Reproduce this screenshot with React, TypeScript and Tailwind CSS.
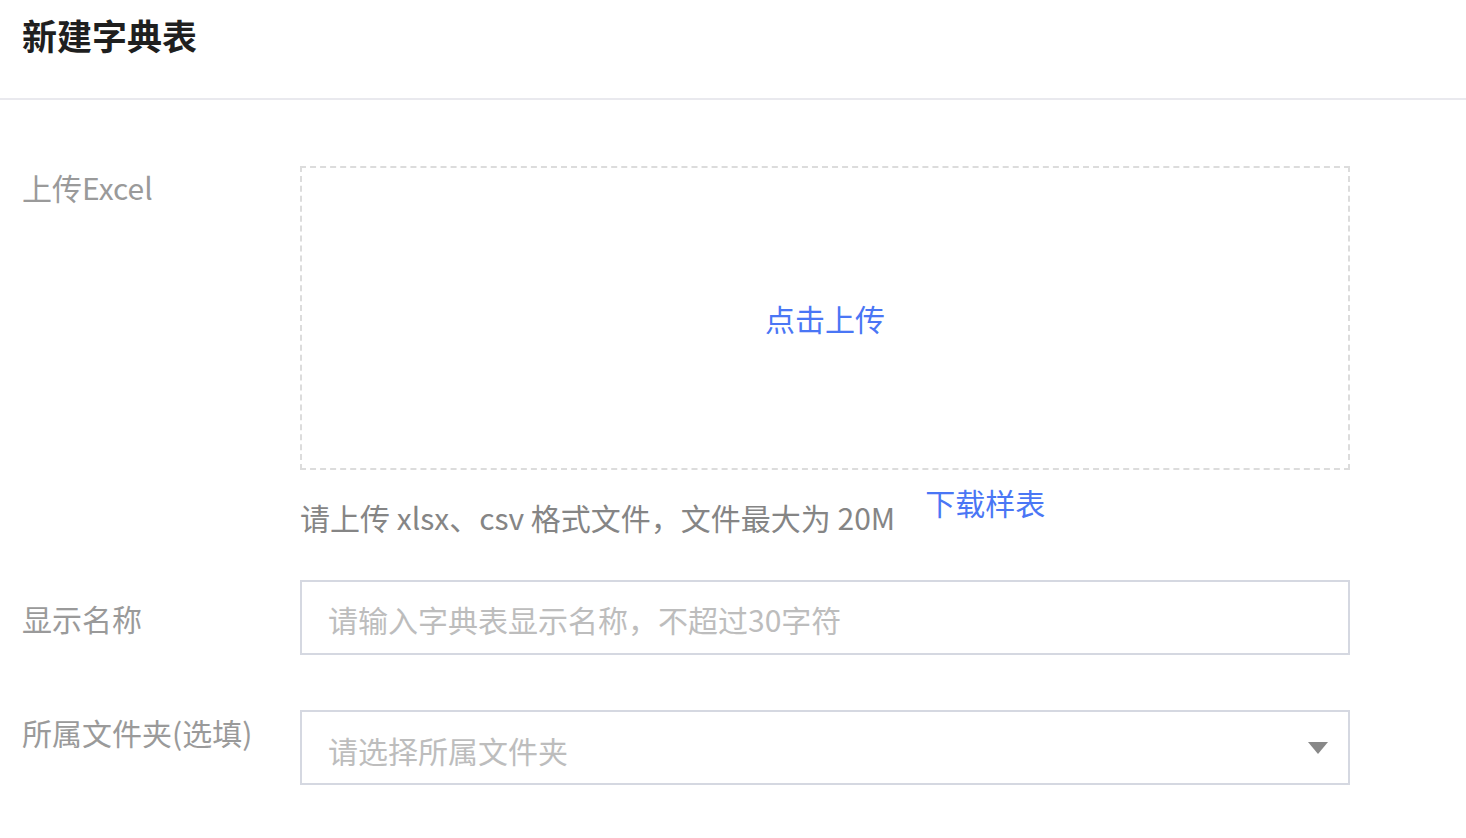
import { ChangeEvent, useRef, useState } from 'react';

/* ── 新建字典表 ──────────────────────────────────────────────────── */
export default function App() {
  const [name, setName] = useState('');
  const [fileName, setFileName] = useState('');
  const fileRef = useRef<HTMLInputElement>(null);

  const onFile = (e: ChangeEvent<HTMLInputElement>) => {
    const f = e.target.files?.[0];
    if (f) setFileName(f.name);
    e.target.value = '';
  };

  return (
    <div className="min-h-screen w-full bg-white font-['Noto_Sans_CJK_SC','Noto_Sans',sans-serif]">
      {/* Header */}
      <div className="h-[100px] border-b-2 border-[#e9e9ee] px-[22px] pt-[10px]">
        <h1 className="text-[35px] font-bold leading-[50px] text-[#1f1f1f]">新建字典表</h1>
      </div>

      {/* Form */}
      <div className="px-[22px] pt-[66px]">
        {/* 上传 */}
        <div className="flex items-start">
          <label className="w-[278px] shrink-0 pt-[1px] text-[30px] leading-[40px] text-[#9a9a9a]">上传Excel</label>
          <div className="w-[1050px]">
            <input ref={fileRef} type="file" accept=".xlsx,.csv" className="hidden" onChange={onFile} />
            <button
              onClick={() => fileRef.current?.click()}
              className="flex h-[304px] w-full items-center justify-center border-2 border-dashed border-[#dcdcdc] text-[30px] leading-[40px] text-[#4a76f5]"
            >
              {fileName || '点击上传'}
            </button>
            <div className="flex items-start">
              <span className="mt-[27px] text-[30px] leading-[40px] text-[#858585]">
                请上传 xlsx、csv 格式文件，文件最大为 20M
              </span>
              <a href="#" className="ml-[30px] mt-[12px] text-[30px] leading-[40px] text-[#4a76f5]">
                下载样表
              </a>
            </div>
          </div>
        </div>

        {/* 显示名称 */}
        <div className="mt-[43px] flex items-center">
          <label className="w-[278px] shrink-0 text-[30px] leading-[40px] text-[#9a9a9a]">显示名称</label>
          <input
            value={name}
            onChange={(e) => setName(e.target.value.slice(0, 30))}
            placeholder="请输入字典表显示名称，不超过30字符"
            className="h-[75px] w-[1050px] border-2 border-[#d5d8e1] px-[26px] pt-[2px] text-[30px] text-[#333] outline-none placeholder:text-[#bdbdbd]"
          />
        </div>

        {/* 所属文件夹 */}
        <div className="mt-[55px] flex items-start">
          <label className="w-[278px] shrink-0 pt-[2px] text-[30px] leading-[40px] text-[#9a9a9a]">所属文件夹(选填)</label>
          <button className="flex h-[75px] w-[1050px] items-center justify-between border-2 border-[#d5d8e1] pl-[26px] pr-[20px] pt-[4px]">
            <span className="text-[30px] leading-[40px] text-[#bdbdbd]">请选择所属文件夹</span>
            <svg width="20" height="12" viewBox="0 0 20 12" className="-mt-[4px]">
              <path d="M0 0 L20 0 L10 12 Z" fill="#888" />
            </svg>
          </button>
        </div>
      </div>
    </div>
  );
}
